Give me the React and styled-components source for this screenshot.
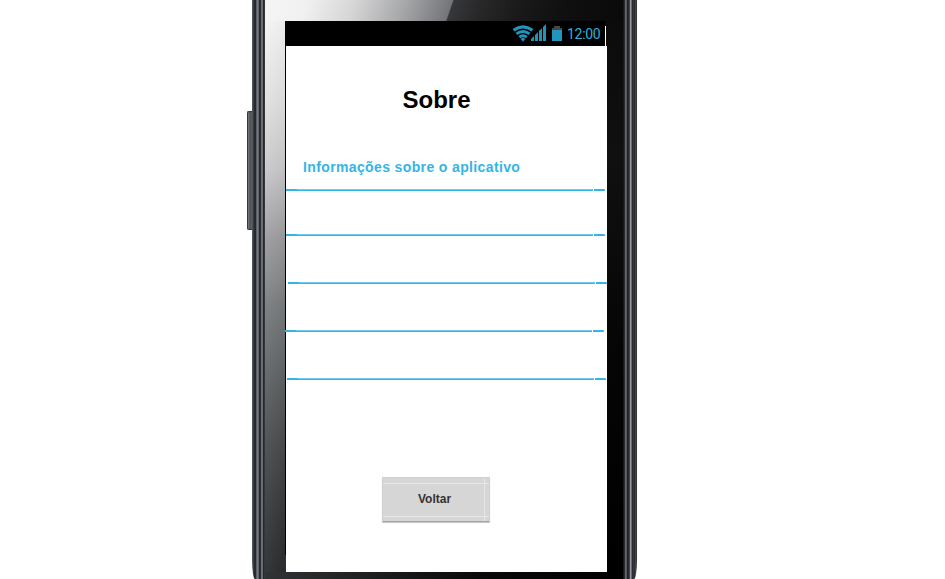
import React from "react";
import styled, { createGlobalStyle } from "styled-components";

const GlobalStyle = createGlobalStyle`
  body { margin: 0; background: #fff; overflow: hidden; }
  * { box-sizing: border-box; }
`;

const Stage = styled.div`
  display: flex;
  width: 945px;
  height: 579px;
  padding-left: 247px;
  overflow: hidden;
  background: #fff;
  font-family: "Liberation Sans", Arial, sans-serif;
`;

const VolumeKey = styled.div`
  flex: none;
  width: 5px;
  height: 119px;
  margin-top: 111px;
  border: 1px solid #34383b;
  border-right: 0;
  border-radius: 2px 0 0 2px;
  background: linear-gradient(90deg, #777d80, #4b5356 50%, #596164);
`;

const Body = styled.div`
  display: grid;
  grid-template-columns: 13px 358px 14px;
  width: 385px;
  height: 579px;
  overflow: hidden;
  border-radius: 0 0 3px 3px / 0 0 20px 20px;
`;

const LeftRail = styled.div`
  background: linear-gradient(90deg,
    #505357 0 1px, #3b3e41 1px 2px, #26292d 2px 4px,
    #5c5f65 4px 5px, #777a80 5px 6px, #606369 6px 7px,
    #282b30 7px 9px, #6c6f75 9px 10px, #6c6f75 10px 11px,
    #24272d 11px 12px, #33363b 12px 13px);
`;

const RightRail = styled.div`
  background: linear-gradient(90deg,
    #171719 0 1px, #29292d 1px 2px, #66666e 2px 3px, #55555c 3px 4px,
    #25252c 4px 6px, #44444d 6px 7px, #9999a2 7px 8px, #666970 8px 9px,
    #292c2f 9px 10px, #363a3c 10px 11px, #292c2e 11px 12px,
    #44484a 12px 13px, #303335 13px 14px);
`;

const Glass = styled.div`
  display: grid;
  grid-template-rows: 21px 551px 7px;
`;

const TopBezel = styled.div`
  background: linear-gradient(109deg,
    #f5f5f5 0, #f0f0f0 12%, #d5d5d6 25%, #a5a6a8 39%, #737579 51.4%,
    #36373a 51.8%, #29292a 59%, #1a1a1a 70%, #101010 82%, #090909 100%);
`;

const Middle = styled.div`
  display: grid;
  grid-template-columns: 20px 322px 16px;
`;

const LeftBezel = styled.div`
  background:
    linear-gradient(90deg, rgba(255,255,255,.06), rgba(0,0,0,.03)),
    linear-gradient(#f4f4f4 0, #dfdfdf 15%, #c7c7c9 27%, #9d9da0 39%, #777a7c 52%, #606365 64%, #484a4c 77%, #36383a 89%, #292b2d 100%);
`;

const RightBezel = styled.div`
  background: linear-gradient(#0b0b0c, #101010 25%, #050505 60%, #000);
`;

const BottomBezel = styled.div`
  background: linear-gradient(90deg, #303235, #242527 20%, #090909 60%, #000);
`;

const Screen = styled.div`
  display: flex;
  flex-direction: column;
  background: linear-gradient(#000 534px, #2b2d2f 534px) 0 0 / 1px 100% no-repeat #fff;
`;

const StatusBar = styled.div`
  display: flex;
  flex: none;
  height: 25px;
  width: 322px;
  background: linear-gradient(#000, #000) 0 0 / 320px 25px no-repeat,
    linear-gradient(#0b0b0c, #0b0b0c) 0 0 / 100% 5px no-repeat, #fff;
  border-right: 1px solid #0b0b0c;
`;

const StatusIcons = styled.svg`
  flex: none;
  width: 51px;
  height: 25px;
  margin-left: 227px;
`;

const Clock = styled.time`
  margin-left: 4px;
  font: 14px/25px Roboto, sans-serif;
  padding-top: 1px;
  letter-spacing: -0.3px;
  color: #2fb0dd;
  white-space: nowrap;
`;

const Title = styled.h1`
  margin: 40px 0 0 117.5px;
  font-size: 24px;
  line-height: 28px;
  font-weight: 700;
  color: #000;
`;

const Info = styled.p`
  margin: 45px 0 0 18px;
  font-size: 14px;
  line-height: 16px;
  letter-spacing: 0.37px;
  font-weight: 700;
  color: #33b5e5;
  white-space: nowrap;
`;

const Rules = styled.div`
  margin-top: 14px;
`;

const Rule = styled.div`
  display: flex;
  width: 319px;
  height: 2px;
  margin: 0 0 ${(p) => p.$gap}px ${(p) => p.$left}px;
`;

const RuleSegment = styled.span`
  width: ${(p) => p.$width}px;
  background: ${(p) => (p.$soft ? "linear-gradient(#70cae9 50%, #33b5e5 50%)" : "#33b5e5")};
  margin-right: ${(p) => p.$after || 0}px;
`;

const BackButton = styled.button`
  width: 108px;
  height: 45px;
  margin: 97px 0 0 97px;
  padding: 0 3px 2px 0;
  border: 1px solid #d0d0d0;
  border-bottom: 1px solid #a3a3a3;
  border-radius: 1px;
  box-shadow: 0 1px 1px #c4c4c4;
  background:
    linear-gradient(#e7e7e7, #e7e7e7) 0 5px / 100% 1px no-repeat,
    linear-gradient(#e7e7e7, #e7e7e7) 0 38px / 100% 1px no-repeat,
    linear-gradient(#e7e7e7, #e7e7e7) 101px 0 / 1px 100% no-repeat,
    #d6d6d6;
  font: 700 12px/16px "Liberation Sans", Arial, sans-serif;
  color: #333;
`;

const rules = [
  { left: 1, gap: 43 },
  { left: 1, gap: 46 },
  { left: 3, gap: 46 },
  { left: 0, gap: 46 },
  { left: 2, gap: 0 },
];

function Indicators() {
  return (
    <StatusIcons viewBox="0 0 51 25" aria-hidden="true">
      <g fill="none" stroke="#2295bd" strokeWidth="3.2">
        <path d="M1.5 9.2Q11 2.6 20.5 9.2" />
        <path d="M4.5 12.9Q11 8 17.5 12.9" strokeWidth="3" />
        <path d="M7.3 16.2Q11 13.3 14.7 16.2" strokeWidth="2.8" />
      </g>
      <path d="M8.6 17.8Q11 16.2 13.4 17.8L11 20.8Z" fill="#2295bd" />
      <path d="M19 20v-2l3-3v5zM23 20v-6l3-3v9zM27 20V10l3-3v13zM31 20V6l3-3v17z" fill="#2295bd" />
      <path d="M42 5h6v2h2v2H40V7h2z" fill="#464646" />
      <path d="M40 9h10v11H40z" fill="#2295bd" />
    </StatusIcons>
  );
}

export default function App() {
  return (
    <>
      <GlobalStyle />
      <Stage>
        <VolumeKey />
        <Body>
          <LeftRail />
          <Glass>
            <TopBezel />
            <Middle>
              <LeftBezel />
              <Screen>
                <StatusBar>
                  <Indicators />
                  <Clock>12:00</Clock>
                </StatusBar>
                <Title>Sobre</Title>
                <Info>Informações sobre o aplicativo</Info>
                <Rules>
                  {rules.map((rule, i) => (
                    <Rule key={i} $left={rule.left} $gap={rule.gap}>
                      <RuleSegment $width={11} />
                      <RuleSegment $width={296} $soft $after={1} />
                      <RuleSegment $width={10} />
                      <RuleSegment $width={1} $soft />
                    </Rule>
                  ))}
                </Rules>
                <BackButton type="button">Voltar</BackButton>
              </Screen>
              <RightBezel />
            </Middle>
            <BottomBezel />
          </Glass>
          <RightRail />
        </Body>
      </Stage>
    </>
  );
}
